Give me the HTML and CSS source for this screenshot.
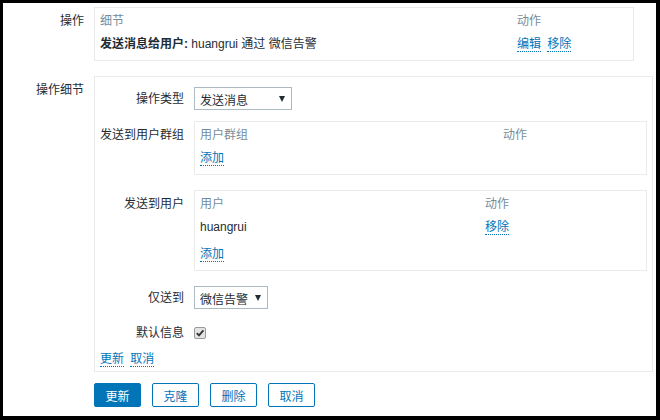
FILE: index.html
```html
<!DOCTYPE html>
<html>
  <head>
    <meta charset="UTF-8">
    <title>操作细节</title>
    <link rel="stylesheet" href="styles.css">
  </head>

  <body>
    <div class="page">

      <!-- 操作 list -->
      <div class="form-row first">
        <div class="form-label">操作</div>
        <div class="box box-ops">
          <div class="trow thead">
            <div class="cell col-detail">细节</div>
            <div class="cell">动作</div>
          </div>
          <div class="trow">
            <div class="cell col-detail"><b>发送消息给用户:</b> huangrui 通过 微信告警</div>
            <div class="cell"><a href="#" class="link">编辑</a> <a href="#" class="link">移除</a></div>
          </div>
        </div>
      </div>

      <!-- 操作细节 -->
      <div class="form-row second">
        <div class="form-label">操作细节</div>
        <div class="box box-detail">

          <div class="field field-center">
            <div class="field-label">操作类型</div>
            <div class="select select-type"><span>发送消息</span><i class="caret"></i></div>
          </div>

          <div class="field">
            <div class="field-label top">发送到用户群组</div>
            <div class="box sub-box">
              <div class="trow thead">
                <div class="cell col-group">用户群组</div>
                <div class="cell">动作</div>
              </div>
              <div class="trow">
                <div class="cell"><a href="#" class="link">添加</a></div>
              </div>
            </div>
          </div>

          <div class="field">
            <div class="field-label top">发送到用户</div>
            <div class="box sub-box">
              <div class="trow thead">
                <div class="cell col-user">用户</div>
                <div class="cell">动作</div>
              </div>
              <div class="trow">
                <div class="cell col-user">huangrui</div>
                <div class="cell"><a href="#" class="link">移除</a></div>
              </div>
              <div class="trow add-row">
                <div class="cell"><a href="#" class="link">添加</a></div>
              </div>
            </div>
          </div>

          <div class="field field-center">
            <div class="field-label">仅送到</div>
            <div class="select select-media"><span>微信告警</span><i class="caret"></i></div>
          </div>

          <div class="field field-center check-row">
            <div class="field-label">默认信息</div>
            <span class="checkbox">
              <svg width="10" height="10" viewBox="0 0 10 10"><path d="M1.8 5.2 L4 7.4 L8.4 2.4" fill="none" stroke="#333" stroke-width="1.8"/></svg>
            </span>
          </div>

          <div class="links-row">
            <a href="#" class="link">更新</a> <a href="#" class="link">取消</a>
          </div>
        </div>
      </div>

      <div class="buttons">
        <button class="btn primary">更新</button>
        <button class="btn">克隆</button>
        <button class="btn">删除</button>
        <button class="btn">取消</button>
      </div>

    </div>
  </body>
</html>
```

FILE: styles.css
```css
html {
  background-color: #000;
}

body {
  margin: 0;
  font-family: "Liberation Sans", "Noto Sans CJK SC", sans-serif;
  font-size: 12px;
  color: #1f2c33;
}

.page {
  background-color: #fff;
  margin: 3px 4px 4px 3px;
  height: 413px;
  overflow: hidden;
}

.form-row {
  display: flex;
}

.form-row.first {
  padding-top: 4px;
}

.form-row.second {
  margin-top: 15px;
}

.form-label {
  width: 81px;
  padding-right: 10px;
  text-align: right;
  line-height: 16px;
  padding-top: 6px;
}

.box {
  border: 1px solid #ebebeb;
  box-sizing: border-box;
}

.box-ops {
  width: 540px;
  padding: 5px 5px 8px 5px;
}

.box-detail {
  width: 559px;
  padding: 10px 5px 4px 5px;
}

.trow {
  display: flex;
  line-height: 16px;
  margin-top: 7px;
}

.trow.thead {
  margin-top: 0;
  color: #768d99;
}

.trow.add-row {
  margin-top: 11px;
}

.col-detail { width: 417px; }
.col-group { width: 303px; }
.col-user { width: 285px; }

.link {
  display: inline-block;
  line-height: 14px;
  color: #0275b8;
  text-decoration: none;
  border-bottom: 1px dotted #0275b8;
  margin-right: 3px;
}

/* detail fields */

.field {
  display: flex;
  margin-bottom: 15px;
}

.field-center {
  align-items: center;
  margin-bottom: 11px;
}

.field-label {
  width: 84px;
  padding-right: 10px;
  text-align: right;
  line-height: 16px;
}

.field-label.top {
  padding-top: 6px;
}

.sub-box {
  width: 453px;
  padding: 5px 5px 8px 5px;
}

.select {
  display: flex;
  align-items: center;
  justify-content: space-between;
  box-sizing: border-box;
  height: 23px;
  border: 1px solid #acbbc2;
  padding: 1px 6px 0 5px;
}

.select-type { width: 98px; }
.select-media { width: 74px; }

.caret {
  width: 0;
  height: 0;
  border-style: solid;
  border-width: 6px 3.5px 0 3.5px;
  border-color: #1f2c33 transparent transparent transparent;
}

.check-row {
  margin-top: 16px;
  margin-bottom: 0;
}

.checkbox {
  display: flex;
  align-items: center;
  justify-content: center;
  box-sizing: border-box;
  width: 12px;
  height: 12px;
  border: 1px solid #9a9a9a;
  border-radius: 2px;
  background-color: #e4e4e4;
}

.links-row {
  margin-top: 10px;
  line-height: 16px;
}

/* bottom buttons */

.buttons {
  display: flex;
  gap: 11px;
  margin-top: 11px;
  padding-left: 91px;
}

.btn {
  width: 47px;
  height: 24px;
  padding: 0;
  border: 1px solid #0275b8;
  border-radius: 2px;
  background-color: #fff;
  color: #0275b8;
  font-family: "Liberation Sans", "Noto Sans CJK SC", sans-serif;
  font-size: 12px;
}

.btn.primary {
  background-color: #0275b8;
  color: #fff;
}
```
